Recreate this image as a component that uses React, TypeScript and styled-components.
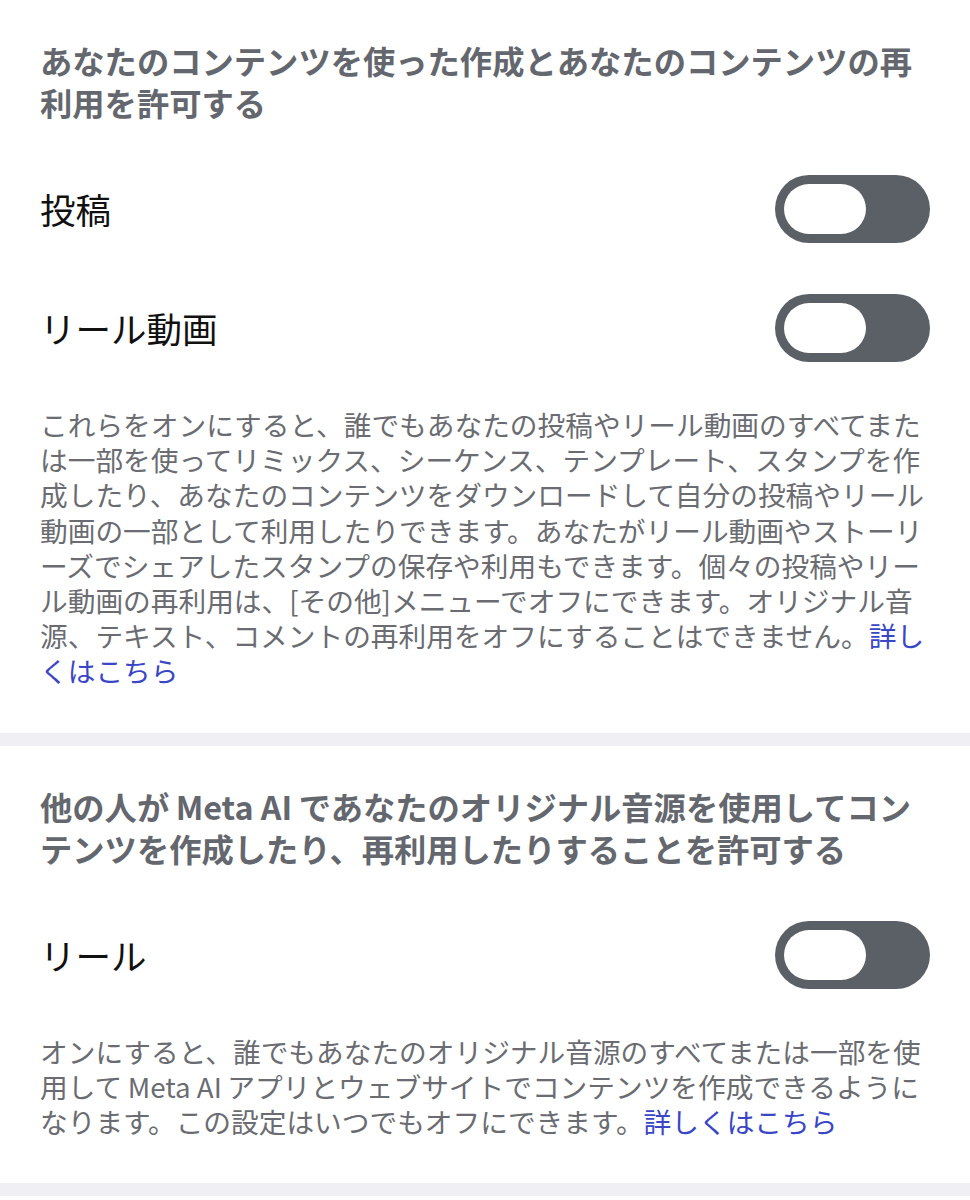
import React, { useState } from "react";
import styled, { createGlobalStyle } from "styled-components";

const GlobalStyle = createGlobalStyle`
    html, body {
        margin: 0;
        padding: 0;
        background: #ffffff;
    }

    body {
        font-family: "Noto Sans CJK JP", "Noto Sans", sans-serif;
        -webkit-font-smoothing: antialiased;
        text-spacing-trim: space-all;
    }
`;

const Page = styled.div`
    width: 970px;
    min-height: 1200px;
    background: #ffffff;
    display: flex;
    flex-direction: column;
`;

const Section = styled.section`
    padding: 39px 22px 44px 40px;
    display: flex;
    flex-direction: column;
`;

const Divider = styled.div`
    height: 13px;
    background: #efeff4;
    flex-shrink: 0;
`;

const SectionTitle = styled.h2`
    margin: 0 8px 0 0;
    font-size: 32.3px;
    line-height: 42px;
    font-weight: 700;
    color: #64676e;
    white-space: pre;
`;

const Rows = styled.div`
    display: flex;
    flex-direction: column;
    gap: 51px;
    margin-top: 52px;
    padding-right: 18px;
`;

const Row = styled.div`
    display: flex;
    align-items: center;
    justify-content: space-between;
`;

const RowLabel = styled.span`
    font-size: 35.5px;
    line-height: 44px;
    color: #111111;
`;

const Track = styled.button<{ $on: boolean }>`
    width: 155px;
    height: 68px;
    padding: 9px;
    border: none;
    border-radius: 34px;
    background: ${(p) => (p.$on ? "#3a46c6" : "#5b5f66")};
    display: flex;
    justify-content: ${(p) => (p.$on ? "flex-end" : "flex-start")};
    cursor: pointer;
    flex-shrink: 0;
`;

const Knob = styled.span`
    width: 82px;
    height: 50px;
    border-radius: 25px;
    background: #ffffff;
`;

/* line breaks are kept as written so the paragraph wraps like the app */
const Description = styled.p`
    margin: 45px 0 0;
    font-size: 27.7px;
    line-height: 35.2px;
    color: #6a6c71;
    white-space: pre;
`;

const LearnMore = styled.a`
    color: #3a46c6;
    text-decoration: none;
`;

interface Setting {
    label: string;
}

interface SectionData {
    title: string;
    settings: Setting[];
    body: string;
    link: string;
}

// thin spaces set Latin words apart from the kana around them
const META_AI = "\u2009Meta AI\u2009";

const sections: SectionData[] = [
    {
        title: "あなたのコンテンツを使った作成とあなたのコンテンツの再\n利用を許可する",
        settings: [{ label: "投稿" }, { label: "リール動画" }],
        body: [
            "これらをオンにすると、誰でもあなたの投稿やリール動画のすべてまた",
            "は一部を使ってリミックス、シーケンス、テンプレート、スタンプを作",
            "成したり、あなたのコンテンツをダウンロードして自分の投稿やリール",
            "動画の一部として利用したりできます。あなたがリール動画やストーリ",
            "ーズでシェアしたスタンプの保存や利用もできます。個々の投稿やリー",
            "ル動画の再利用は、[その他]メニューでオフにできます。オリジナル音",
            "源、テキスト、コメントの再利用をオフにすることはできません。",
        ].join("\n"),
        link: "詳し\nくはこちら",
    },
    {
        title: `他の人が${META_AI}であなたのオリジナル音源を使用してコン\nテンツを作成したり、再利用したりすることを許可する`,
        settings: [{ label: "リール" }],
        body: [
            "オンにすると、誰でもあなたのオリジナル音源のすべてまたは一部を使",
            `用して${META_AI}アプリとウェブサイトでコンテンツを作成できるように`,
            "なります。この設定はいつでもオフにできます。",
        ].join("\n"),
        link: "詳しくはこちら",
    },
];

const Toggle: React.FC = () => {
    const [on, setOn] = useState(false);
    return (
        <Track $on={on} onClick={() => setOn(!on)} aria-pressed={on}>
            <Knob />
        </Track>
    );
};

const SettingsSection: React.FC<{ data: SectionData }> = ({ data }) => (
    <Section>
        <SectionTitle>{data.title}</SectionTitle>
        <Rows>
            {data.settings.map((s) => (
                <Row key={s.label}>
                    <RowLabel>{s.label}</RowLabel>
                    <Toggle />
                </Row>
            ))}
        </Rows>
        <Description>
            {data.body}
            <LearnMore href="#">{data.link}</LearnMore>
        </Description>
    </Section>
);

export default function App() {
    return (
        <>
            <GlobalStyle />
            <Page>
                {sections.map((s, idx) => (
                    <React.Fragment key={idx}>
                        <SettingsSection data={s} />
                        <Divider />
                    </React.Fragment>
                ))}
            </Page>
        </>
    );
}
